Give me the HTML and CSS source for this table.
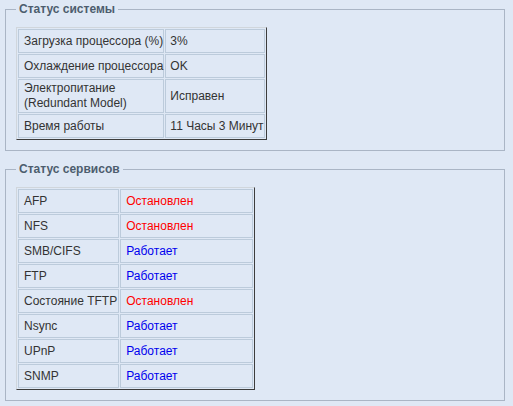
FILE: index.html
```html
<!DOCTYPE html>
<html>
<head>
<meta charset="utf-8">
<link rel="stylesheet" href="styles.css">
</head>
<body>
<fieldset class="box box-sys">
  <legend>Статус системы</legend>
  <table class="grid grid-sys" cellspacing="1">
    <tr><td class="c1">Загрузка процессора (%)</td><td class="c2">3%</td></tr>
    <tr><td class="c1">Охлаждение процессора</td><td class="c2">OK</td></tr>
    <tr class="tall"><td class="c1">Электропитание<br>(Redundant Model)</td><td class="c2">Исправен</td></tr>
    <tr><td class="c1">Время работы</td><td class="c2">11 Часы 3 Минут</td></tr>
  </table>
</fieldset>
<fieldset class="box box-svc">
  <legend>Статус сервисов</legend>
  <table class="grid grid-svc" cellspacing="1">
    <tr><td class="c1">AFP</td><td class="c2 off">Остановлен</td></tr>
    <tr><td class="c1">NFS</td><td class="c2 off">Остановлен</td></tr>
    <tr><td class="c1">SMB/CIFS</td><td class="c2 on">Работает</td></tr>
    <tr><td class="c1">FTP</td><td class="c2 on">Работает</td></tr>
    <tr><td class="c1">Состояние TFTP</td><td class="c2 off">Остановлен</td></tr>
    <tr><td class="c1">Nsync</td><td class="c2 on">Работает</td></tr>
    <tr><td class="c1">UPnP</td><td class="c2 on">Работает</td></tr>
    <tr><td class="c1">SNMP</td><td class="c2 on">Работает</td></tr>
  </table>
</fieldset>
</body>
</html>
```
FILE: styles.css
```css
html, body {
  margin: 0;
  padding: 0;
  background: #dfe8f5;
}
body {
  padding: 2px 8px 0 5px;
  font-family: "Liberation Sans", Arial, sans-serif;
  font-size: 12px;
  color: #333;
  width: 500px;
}
.box {
  margin: 0;
  border: 1px solid #aab5c5;
  padding: 11px 10px 10px 10px;
  width: 478px;
}
.box-svc {
  margin-top: 11px;
}
legend {
  font-weight: bold;
  font-size: 12px;
  color: #4d5d6e;
  padding: 0 3px;
  margin-left: 0;
}
.grid {
  border-style: solid;
  border-width: 1px;
  border-color: #d0d6dc #3c3c3c #3c3c3c #d0d6dc;
  border-collapse: separate;
  border-spacing: 1px;
}
.grid td {
  border: 1px solid #bccbdb;
  padding: 0 0 0 5px;
  height: 22px;
  white-space: nowrap;
  vertical-align: middle;
}
.grid-sys .c1 { width: 139px; }
.grid-sys .c2 { width: 94px; padding-left: 4px; }
.grid-sys .tall td { height: 32px; }
.grid-sys .tall .c1 { line-height: 15px; }
.grid-svc { width: 239px; }
.grid-svc .c1 { width: 1px; padding-right: 1px; }
.off { color: #ff0000; }
.on { color: #0000ee; }
```
